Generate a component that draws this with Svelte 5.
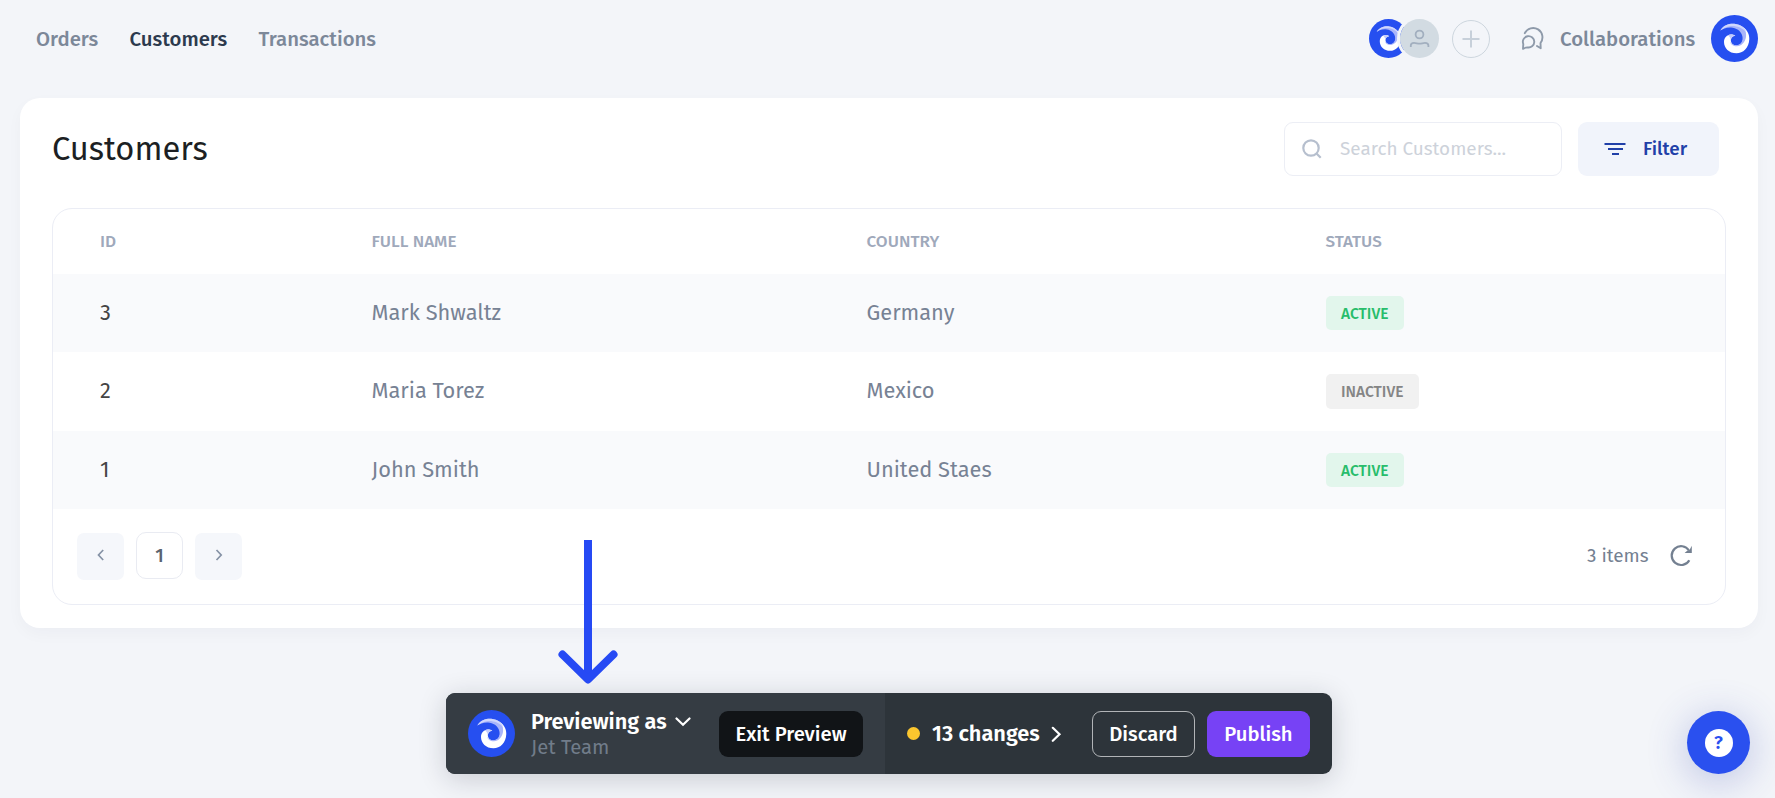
<script>
  const nav = [
    { label: 'Orders' },
    { label: 'Customers', active: true },
    { label: 'Transactions' }
  ];
  const rows = [
    { id: 3, name: 'Mark Shwaltz', country: 'Germany', status: 'Active' },
    { id: 2, name: 'Maria Torez', country: 'Mexico', status: 'Inactive' },
    { id: 1, name: 'John Smith', country: 'United Staes', status: 'Active' }
  ];
</script>

{#snippet logo(size)}
  <svg class="logo" width={size} height={size} viewBox="0 0 47 47">
    <circle cx="23.500" cy="23.500" r="23.500" fill="#264ff0" />
    <path fill="#fff" d="M30 11C35.500 13.500 38.500 18.500 38.300 24C38 33 32 38.300 25.500 38.300C18 38.300 13 33 13 27C13 22.500 16 19.600 20 19.400C22 19.300 23.800 20.200 24.300 20.800C21 21 19.400 23.800 20 26.500C20.700 29.600 24 31 27 30.300C32 29 34.500 23 30 11Z" />
    <path fill="#a9b5fa" d="M9.300 15.600C13 9.500 19 8.400 24.500 9C32.500 10 36 16 35 22C34 27.500 30.500 31 26 31.300C22.500 31.400 19.500 29.500 19 26.500C20.500 29.800 24 30.700 26.800 30C31 28.800 32.200 25 31.300 21C30 15.700 25 12.800 20 12.500C15 12.300 12 13.800 9.300 15.600Z" />
    <path fill="#d0d7fd" d="M9.300 15.600C13 9.500 19 8.400 24.500 9C30 9.800 34 13 35.500 17.500C31 12 24 10.300 18.500 11.200C14.500 11.900 11.800 13.500 9.300 15.600Z" />
    <path fill="#c4ccfc" d="M17 20.200C19.500 18.800 22.500 19.200 24.300 20.800C21.500 21 20 22.800 19.900 25.200C19.300 22.800 18.500 21.300 17 20.200Z" />
  </svg>
{/snippet}

<div class="page">
  <header>
    <nav>
      {#each nav as item}
        <a class:active={item.active}>{item.label}</a>
      {/each}
    </nav>
    <div class="people">
      {@render logo(39)}
      <span class="person">
        <svg width="39" height="39" viewBox="0 0 39 39" fill="none" stroke="#a2afbf" stroke-width="1.800">
          <circle cx="19.500" cy="15.500" r="3.900" />
          <path d="M10.800 28V26.500C10.800 24.500 12 23.900 14 23.900C16 23.900 17.500 24.700 19.500 24.700C21.500 24.700 23 23.900 25 23.900C27 23.900 28.400 24.500 28.400 26.500V28" />
        </svg>
      </span>
      <span class="add">
        <svg width="18" height="18" viewBox="0 0 18 18" stroke="#c7d0da" stroke-width="2"><path d="M9 .5V17.500M.5 9H17.500" /></svg>
      </span>
    </div>
    <div class="collab">
      <svg width="24" height="24" viewBox="0 0 24 24" fill="none" stroke="#8e9aaa" stroke-width="1.900" stroke-linecap="round" stroke-linejoin="round">
        <path d="M4.800 6.200A9.300 9.300 0 1 1 20.500 16L20.700 21.200L17 19" />
        <path d="M3 21.800L3.300 17A5.700 5.700 0 1 1 7.300 20.400C5.800 20.500 4.600 21 3 21.800Z" />
      </svg>
      <span>Collaborations</span>
      {@render logo(47)}
    </div>
  </header>

  <main>
    <div class="top">
      <h1>Customers</h1>
      <div class="search">
        <svg width="20" height="20" viewBox="0 0 20 20" fill="none" stroke="#b6bfce" stroke-width="2.200"><circle cx="9" cy="9" r="7.700" /><path d="M14.500 14.500L18.700 18.700" /></svg>
        <span>Search Customers...</span>
      </div>
      <button class="filter">
        <svg width="22" height="14" viewBox="0 0 22 14" stroke="#2140a8" stroke-width="2"><path d="M.5 2H21.500M4 7H19M8 12H15" /></svg>
        <span>Filter</span>
      </button>
    </div>

    <section>
      <div class="row head">
        <span>ID</span><span>FULL NAME</span><span>COUNTRY</span><span>STATUS</span>
      </div>
      {#each rows as row}
        <div class="row">
          <span class="id">{row.id}</span>
          <span>{row.name}</span>
          <span>{row.country}</span>
          <b class="badge" class:off={row.status === 'Inactive'}>{row.status.toUpperCase()}</b>
        </div>
      {/each}
      <footer>
        <button class="page-btn"><svg width="8" height="12" viewBox="0 0 8 12"><path d="M6.200 1L1.500 6L6.200 11" /></svg></button>
        <button class="page-btn current">1</button>
        <button class="page-btn"><svg width="8" height="12" viewBox="0 0 8 12"><path d="M1.500 1L6.200 6L1.500 11" /></svg></button>
        <span class="count">3 items</span>
        <svg class="refresh" width="24" height="24" viewBox="0 0 24 24" fill="none" stroke="#748091" stroke-width="2.200">
          <path d="M20 6.500A9.400 9.400 0 1 0 20.300 16.200" />
          <path d="M22.800 1.800V8.900H15.600L18.200 6.800L20.500 6Z" fill="#748091" stroke="none" />
        </svg>
      </footer>
    </section>
  </main>

  <div class="bar">
    <div class="preview">
      {@render logo(47)}
      <div class="who">
        <div class="as"><span>Previewing as</span>
          <svg width="16" height="10" viewBox="0 0 16 10" fill="none" stroke="#fff" stroke-width="2.200" stroke-linecap="round"><path d="M1.500 1.500L8 7.800L14.500 1.500" /></svg>
        </div>
        <div class="team">Jet Team</div>
      </div>
      <button class="exit">Exit Preview</button>
    </div>
    <div class="changes">
      <i></i>
      <span>13 changes</span>
      <svg width="11" height="16" viewBox="0 0 11 16" fill="none" stroke="#fff" stroke-width="2.200" stroke-linecap="round"><path d="M1.800 1.800L8.500 8.300L1.800 14.800" /></svg>
      <button class="discard">Discard</button>
      <button class="publish">Publish</button>
    </div>
  </div>

  <svg class="arrow" width="60" height="146" viewBox="0 0 60 146" fill="none" stroke="#264af4" stroke-width="8">
    <path d="M30 2V138" /><path d="M4.500 116.500L30 141.500L55.500 116.500" stroke-linecap="round" stroke-linejoin="round" />
  </svg>

  <button class="help"><span>?</span></button>
</div>

<style>
  :global(body) { background: #f3f5f9; }
  * { box-sizing: border-box; }
  .page {
    height: 798px;
    position: relative;
    overflow: hidden;
    background: #f3f5f9;
    font-family: 'Fira Sans', 'Noto Sans', sans-serif;
    white-space: nowrap;
    color: #748091;
  }
  button { font: inherit; border: 0; padding: 0; }
  svg { display: block; flex: none; }
  header { height: 98px; padding: 0 17px 21px 36px; display: flex; align-items: center; }
  nav { display: flex; gap: 31.300px; padding-top: 1px; font-size: 20.350px; font-weight: 500; }
  nav a { color: #7c8899; }
  nav a.active { color: #2c3a4e; }
  .people { margin-left: auto; display: flex; align-items: center; }
  .person { margin: 0 10px 0 -11px; border: 3px solid #f3f5f9; border-radius: 50%; }
  .person svg { background: #d2dbe2; border-radius: 50%; }
  .add { width: 38px; height: 38px; border: 1px solid #cdd6de; border-radius: 50%; display: grid; place-items: center; }
  .collab { display: flex; align-items: center; margin-left: 30px; font-size: 20.350px; font-weight: 500; color: #7c8899; }
  .collab span { width: 136px; margin: 1px 15px 0 16px; }

  main { height: 530px; margin: 0 17px 0 20px; padding: 24px 32px 23px; background: #fff; border-radius: 20px; box-shadow: 0 6px 16px rgba(30, 40, 70, 0.030); }
  .top { display: flex; align-items: center; height: 54px; padding-right: 7px; margin-bottom: 32px; }
  h1 { margin: 0; font-size: 32.700px; line-height: 50px; font-weight: 400; color: #1c1f23; }
  .search { margin-left: auto; width: 278px; height: 54px; border: 1px solid #eceef5; border-radius: 9px; display: flex; align-items: center; padding-left: 16.500px; gap: 18.500px; font-size: 18.900px; color: #cdd2da; }
  .search span, .filter span { padding-bottom: 2px; }
  .filter { margin-left: 16px; width: 141px; height: 54px; border-radius: 9px; background: #f1f4fb; display: flex; align-items: center; gap: 17px; padding-left: 26px; color: #2140a8; font-size: 18.900px; font-weight: 500; }

  section { height: 397px; border: 1px solid #ebedf5; border-radius: 20px; }
  .row { height: 78.330px; display: grid; grid-template-columns: 271.500px 495px 459px 1fr; padding-left: 47px; align-items: center; font-size: 21.800px; color: #778294; }
  .row:nth-child(even) { background: #f9fafc; }
  .row.head { height: 65px; padding-bottom: 1px; font-size: 17.100px; font-weight: 500; color: #9fa9bb; }
  .id { color: #444; }
  .badge { justify-self: start; height: 34.500px; line-height: 35.500px; padding: 0 15.500px; border-radius: 5px; background: #e2f6ec; color: #28bd6b; font-size: 15.550px; font-weight: 500; }
  .badge.off { background: #f1f1f1; color: #858585; }
  footer { height: 94px; display: flex; align-items: center; gap: 12px; padding: 0 32px 0 24px; }
  .page-btn { width: 47px; height: 47px; border-radius: 7px; background: #f5f7fb; display: grid; place-items: center; margin-top: 1px; }
  .page-btn svg { margin-top: -2px; }
  .page-btn path { fill: none; stroke: #8592a5; stroke-width: 1.700; }
  .current { margin-top: 0; background: #fff; border: 1px solid #e9ebf2; border-radius: 10px; font-size: 18.900px; font-weight: 500; color: #5b6470; }
  .count { margin-left: auto; font-size: 18.900px; width: 62px; }
  .refresh { margin-left: 8px; }

  .bar { width: 886px; height: 81px; margin: 65px 0 0 446px; border-radius: 9px; display: flex; background: #2d343a; color: #fff; box-shadow: 0 5px 28px rgba(20, 25, 40, 0.190); }
  .preview { width: 439px; background: #353c43; border-radius: 9px 0 0 9px; display: flex; align-items: center; padding: 0 22px; }
  .who { margin-left: 16px; padding-top: 2px; }
  .as { display: flex; align-items: center; gap: 9px; height: 25px; padding-top: 2px; font-size: 21.750px; font-weight: 600; }
  .as span { width: 135px; }
  .team { height: 27px; line-height: 27px; font-size: 20.250px; color: #717c8a; }
  .bar button { height: 46px; border-radius: 9px; font-size: 20.250px; font-weight: 500; color: #fff; padding-top: 1px; }
  .bar .exit { margin-left: auto; width: 144px; background: #111417; }
  .changes { flex: 1; display: flex; align-items: center; padding: 0 22px; font-size: 21.750px; font-weight: 600; }
  .changes i { width: 13px; height: 13px; border-radius: 50%; background: #fbc62e; margin-right: 12px; }
  .changes span { width: 109px; margin-right: 10px; }
  .bar .discard { margin: 0 12px 0 auto; width: 103px; background: none; border: 1px solid #b1b4b7; }
  .bar .publish { width: 103px; background: #7742f5; }

  .arrow { position: absolute; left: 558px; top: 538px; }
  .help { position: absolute; left: 1687px; top: 711px; width: 63px; height: 63px; border-radius: 50%; background: #2a50ef; display: grid; place-items: center; box-shadow: 0 7px 40px rgba(50, 70, 180, 0.300); }
  .help span { width: 28px; height: 28px; border-radius: 50%; background: #fff; color: #2a50ef; font-size: 18.500px; line-height: 28px; font-weight: 600; text-align: center; }
</style>
